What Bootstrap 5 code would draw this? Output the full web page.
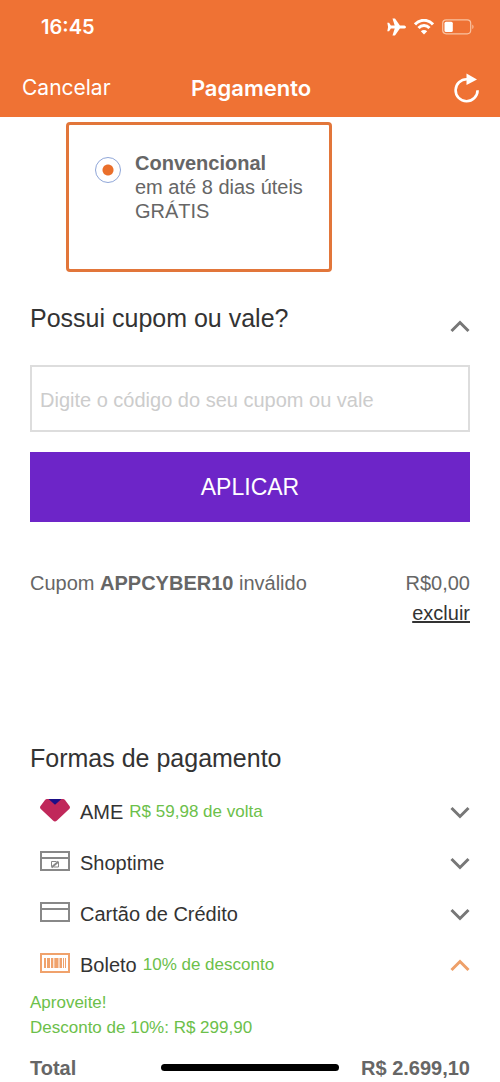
<!DOCTYPE html>
<html lang="pt-BR">
<head>
<meta charset="utf-8">
<meta name="viewport" content="width=device-width, initial-scale=1">
<title>Pagamento</title>
<link href="https://cdn.jsdelivr.net/npm/bootstrap@5.3.0/dist/css/bootstrap.min.css" rel="stylesheet">
<style>
  body { font-family: "Liberation Sans", Arial, sans-serif; font-size: 20px; line-height: 24px; color: #666; background: #fff; }
  .app-header { background: #ef7234; color: #fff; font-family: Inter, sans-serif; padding-bottom: 5px; }
  .status-bar { height: 54px; padding: 0 26px 0 41px; font-weight: 600; }
  .nav-bar { height: 58px; padding: 10px 20px 0 22px; font-size: 21px; }
  .nav-bar > * { flex: 1 1 0; }
  .nav-bar h1 { font-size: 22px; font-weight: 600; line-height: 28px; }
  .plain-btn { background: none; border: 0; padding: 0; color: inherit; font-size: inherit; line-height: 28px; }
  .page-main { padding: 5px 30px 0; }
  .shipping { border: 3px solid #e2763a; border-radius: 4px; width: 266px; height: 150px; margin-left: 36px; padding: 26px 24px; gap: 14px; }
  .shipping .form-check-input { width: 26px; height: 26px; margin: 6px 0 0 2px; border: 1px solid #8fa6d8; flex: none; background: #fff; }
  .shipping .form-check-input:checked { background: radial-gradient(circle, #ea6f2b 5px, transparent 6px); border-color: #8fa6d8; }
  .section-title { font-size: 25px; line-height: 30px; font-weight: 400; color: #333; margin: 0; }
  .coupon-head { margin-top: 31px; }
  .coupon-input { height: 67px; margin-top: 32px; border: 2px solid #ddd; border-radius: 0; padding: 3px 8px 0; font-size: 20px; }
  .coupon-input::placeholder { color: #ccc; }
  .apply-btn { height: 70px; margin-top: 20px; border: 0; border-radius: 0; background: #6d25c8; color: #fff; font-size: 23px; }
  .coupon-result { margin-top: 46px; line-height: 30px; }
  .coupon-result a { color: #333; }
  .payments { margin-top: 115px; }
  .pay-list { margin-top: 13px; }
  .pay-row { height: 51px; padding: 0 0 0 10px; color: #333; font-size: 20px; background: none; border: 0; text-align: left; }
  .pay-icon { width: 30px; height: 24px; margin-right: 10px; margin-bottom: 1px; flex: none; }
  .green { color: #6cc04a; font-size: 17px; line-height: 25px; }
  .tag { margin-left: 6px; margin-bottom: 1px; }
  .chev { width: 20px; height: 14px; fill: none; stroke: #777; stroke-width: 3; flex: none; }
  .total { margin-top: 14px; line-height: 28px; }
  .home-bar { width: 178px; height: 7px; bottom: 11px; left: 50%; margin-left: -89px; background: #000; border-radius: 4px; }
</style>
</head>
<body>
<header class="app-header">
  <div class="status-bar d-flex align-items-center justify-content-between">
    <span>16:45</span>
    <span class="d-flex align-items-center gap-2">
      <svg width="20" height="18" viewBox="0 0 20 18" fill="#fff" aria-hidden="true"><path d="M20 9c0 1-1.200 1.600-2.500 1.600h-3.600L9 17.500H6.500l2.200-6.900H4.900L3.100 13.200H1.300L2.100 9l-.8-4.200h1.800l1.800 2.600h3.800L6.500.5H9l4.900 6.900h3.600c1.300 0 2.500.6 2.500 1.600z"/></svg>
      <svg width="20" height="16" viewBox="0 0 20 16" fill="none" stroke="#fff" stroke-width="3" aria-hidden="true"><path d="M1 5.500C6-.1 14-.1 19 5.500M4.500 9C7.600 5.600 12.400 5.600 15.500 9"/><path fill="#fff" stroke="none" d="M10 15.500 6.800 12.200c1.800-1.700 4.600-1.700 6.400 0z"/></svg>
      <svg width="32" height="16" viewBox="0 0 32 16" fill="none" aria-hidden="true"><rect x=".7" y=".8" width="28" height="14" rx="3.500" stroke="#f9c2a0" stroke-width="1.200"/><rect x="2.500" y="2.700" width="8.300" height="10.200" rx="1.500" fill="#fff"/><path d="M30.300 5.500v4.600c1.700-.8 1.700-3.800 0-4.600z" fill="#f9c2a0"/></svg>
    </span>
  </div>
  <nav class="nav-bar d-flex align-items-center">
    <div><button type="button" class="plain-btn">Cancelar</button></div>
    <h1 class="m-0 text-center">Pagamento</h1>
    <div class="text-end">
      <button type="button" class="plain-btn" aria-label="Recarregar"><svg class="d-block" width="27" height="34" viewBox="0 -5 27 34" aria-hidden="true"><path d="M14 5.200A11 11 0 1 0 24.600 16.200" fill="none" stroke="#fff" stroke-width="2.600"/><path d="M13.500-.5v11.500L24 5.500z" fill="#fff"/></svg></button>
    </div>
  </nav>
</header>

<main class="page-main">
  <div class="shipping d-flex align-items-start">
    <input class="form-check-input" type="radio" name="frete" id="convencional" checked>
    <label for="convencional"><strong>Convencional</strong><br>em até 8 dias úteis<br>GRÁTIS</label>
  </div>

  <section>
    <div class="coupon-head d-flex align-items-end justify-content-between">
      <h2 class="section-title"><label for="cupom">Possui cupom ou vale?</label></h2>
      <button type="button" class="plain-btn" aria-label="Recolher cupom"><svg class="chev d-block" viewBox="0 0 20 14"><path d="M1.500 12 10 3.500 18.500 12"/></svg></button>
    </div>
    <input type="text" id="cupom" class="form-control coupon-input" placeholder="Digite o código do seu cupom ou vale">
    <button type="button" class="btn apply-btn w-100">APLICAR</button>
    <div class="coupon-result d-flex justify-content-between">
      <span>Cupom <strong>APPCYBER10</strong> inválido</span>
      <span class="text-end">R$0,00<br><a href="#">excluir</a></span>
    </div>
  </section>

  <section class="payments">
    <h2 class="section-title">Formas de pagamento</h2>
    <div class="pay-list">
      <button type="button" class="pay-row w-100 d-flex align-items-center">
        <svg class="pay-icon" viewBox="0 0 30 24" aria-hidden="true"><path d="M7 0h16c.8 0 1.400.3 2 1l4.300 5.800c.9 1.200.9 2.200-.1 3.200L17 21.500c-1.300 1.200-2.700 1.200-4 0L.8 10C-.2 9-.2 8 .7 6.800L5 1c.6-.7 1.200-1 2-1z" fill="#c0285a"/><path d="M8.500 0h13L15 5.800z" fill="#1b0f87"/></svg>
        <span>AME</span><span class="green tag">R$ 59,98 de volta</span>
        <svg class="chev ms-auto" viewBox="0 0 20 14" aria-hidden="true"><path d="M1.500 3 10 11.500 18.500 3"/></svg>
      </button>
      <button type="button" class="pay-row w-100 d-flex align-items-center">
        <svg class="pay-icon" viewBox="0 0 30 24" fill="none" stroke="#888" stroke-width="2" aria-hidden="true"><path d="M1 2h28v18H1zM1 8h28"/><path d="M11.500 16.500v-5h5M18.500 12v5h-5" stroke-width="1"/><path d="m11.500 17.500 7-6" stroke-width="2"/></svg>
        <span>Shoptime</span>
        <svg class="chev ms-auto" viewBox="0 0 20 14" aria-hidden="true"><path d="M1.500 3 10 11.500 18.500 3"/></svg>
      </button>
      <button type="button" class="pay-row w-100 d-flex align-items-center">
        <svg class="pay-icon" viewBox="0 0 30 24" fill="none" stroke="#888" stroke-width="2" aria-hidden="true"><path d="M1 2h28v18H1zM1 8h28"/></svg>
        <span>Cartão de Crédito</span>
        <svg class="chev ms-auto" viewBox="0 0 20 14" aria-hidden="true"><path d="M1.500 3 10 11.500 18.500 3"/></svg>
      </button>
      <button type="button" class="pay-row w-100 d-flex align-items-center" aria-expanded="true">
        <svg class="pay-icon" viewBox="0 0 30 24" fill="none" stroke="#f0a26c" stroke-width="2" aria-hidden="true"><path d="M1 2h28v18H1z"/><path d="M5 6v10M12 6v10M21 6v10" stroke-width="2"/><path d="M8.500 6v10M16.500 6v10" stroke-width="3"/><path d="M14.200 6v10M19 6v10M23.500 6v10M25.500 6v10" stroke-width="1"/></svg>
        <span>Boleto</span><span class="green tag">10% de desconto</span>
        <svg class="chev ms-auto" style="stroke:#eea069" viewBox="0 0 20 14" aria-hidden="true"><path d="M1.500 12 10 3.500 18.500 12"/></svg>
      </button>
    </div>
    <p class="green m-0">Aproveite!<br>Desconto de 10%: R$ 299,90</p>
    <div class="total d-flex justify-content-between fw-bold"><span>Total</span><span>R$ 2.699,10</span></div>
  </section>
</main>
<div class="home-bar position-fixed"></div>
<script src="https://cdn.jsdelivr.net/npm/bootstrap@5.3.0/dist/js/bootstrap.bundle.min.js"></script>
</body>
</html>
